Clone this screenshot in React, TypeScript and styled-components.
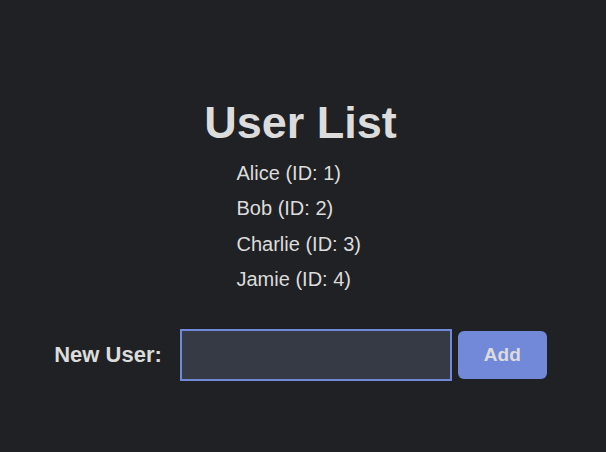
import React from "react";
import styled, { createGlobalStyle } from "styled-components";

const Global = createGlobalStyle`
  html, body {
    margin: 0;
    padding: 0;
    background: #202124;
    height: 100%;
  }
  body {
    font-family: "Liberation Sans", Arial, sans-serif;
    color: #dcdcdc;
  }
`;

const Page = styled.div`
  width: 601px;
  display: flex;
  flex-direction: column;
  align-items: center;
  padding-top: 97px;
`;

const Title = styled.h1`
  margin: 0;
  font-size: 45px;
  line-height: 52px;
  font-weight: 700;
  color: #dcdcdc;
`;

const List = styled.ul`
  list-style: none;
  margin: 7px 0 0;
  padding: 0;
  width: 128px;
`;

const Item = styled.li`
  font-size: 20px;
  line-height: 35.3px;
  white-space: nowrap;
  color: #dcdcdc;
`;

const Form = styled.form`
  margin-top: 32px;
  display: flex;
  align-items: center;
`;

const Label = styled.label`
  font-size: 22px;
  font-weight: 700;
  color: #dcdcdc;
  margin-right: 18px;
`;

const Input = styled.input`
  box-sizing: border-box;
  width: 272px;
  height: 52px;
  background: #363a45;
  border: 2px solid #7189da;
  outline: none;
  color: #dcdcdc;
  font-family: inherit;
  font-size: 18px;
  padding: 0 10px;
  margin: 0 6px 0 0;
`;

const Button = styled.button`
  box-sizing: border-box;
  width: 89px;
  height: 48px;
  background: #7289da;
  border: none;
  border-radius: 6px;
  color: #dcdcdc;
  font-family: inherit;
  font-size: 19px;
  font-weight: 700;
  cursor: pointer;
`;

const users = [
  { name: "Alice", id: 1 },
  { name: "Bob", id: 2 },
  { name: "Charlie", id: 3 },
  { name: "Jamie", id: 4 },
];

export default function App() {
  return (
    <>
      <Global />
      <Page>
        <Title>User List</Title>
        <List>
          {users.map((u) => (
            <Item key={u.id}>
              {u.name} (ID: {u.id})
            </Item>
          ))}
        </List>
        <Form onSubmit={(e) => e.preventDefault()}>
          <Label htmlFor="newUser">New User:</Label>
          <Input id="newUser" type="text" />
          <Button type="submit">Add</Button>
        </Form>
      </Page>
    </>
  );
}
